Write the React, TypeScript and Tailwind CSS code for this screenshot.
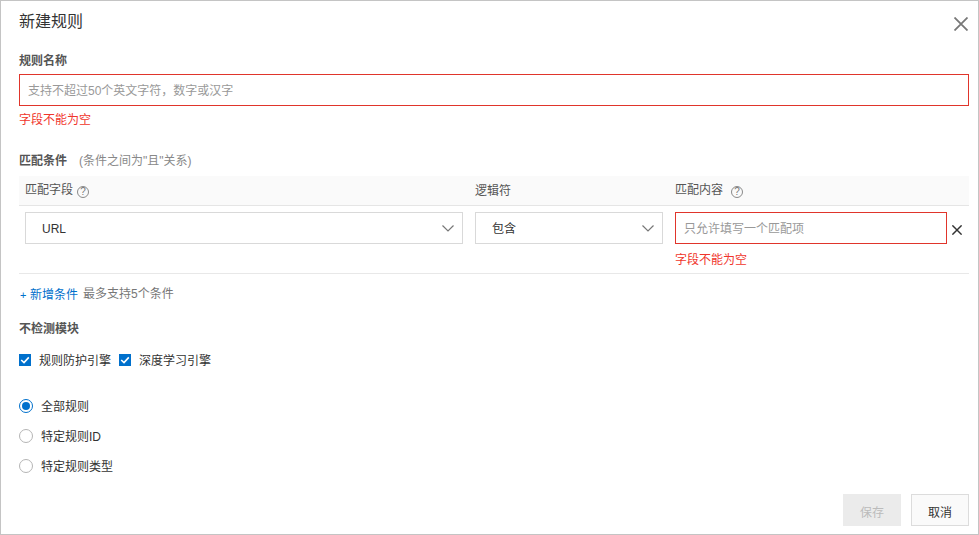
import React from 'react'

const Help = ({ className }: { className: string }) => (
    <span className={`mt-[3px] inline-flex h-[12px] w-[12px] items-center justify-center rounded-full border border-[#8a8a8a] text-[10px] leading-none text-[#777] ${className}`}>?</span>
)

const CrossIcon = ({ className, size, width }: { className: string, size: number, width: number }) => (
    <svg viewBox="0 0 14 14" width={size} height={size} className={className} fill="none" stroke="currentColor" strokeWidth={width}>
        <path d="M0.5 0.5 L13.5 13.5 M13.5 0.5 L0.5 13.5" />
    </svg>
)

const Select = ({ value, className }: { value: string, className: string }) => (
    <div className={`flex h-[32px] items-center justify-between border border-[#d9d9d9] bg-white pl-[16px] pr-[8px] text-[#333] ${className}`}>
        <span className="pt-[2px]">{value}</span>
        <svg viewBox="0 0 12 7" className="mt-[1px] h-[7px] w-[12px]" fill="none" stroke="#777" strokeWidth="1.2">
            <path d="M0.5 0.5 L6 6 L11.5 0.5" />
        </svg>
    </div>
)

const ErrorText = ({ className }: { className: string }) => (
    <div className={`h-[16px] text-[12px] leading-[16px] text-[#f0352b] ${className}`}>字段不能为空</div>
)

const Check = ({ label }: { label: string }) => (
    <label className="flex items-center">
        <span className="flex h-[12px] w-[12px] items-center justify-center bg-[#0070cc]">
            <svg viewBox="0 0 12 12" className="h-[12px] w-[12px]" fill="none" stroke="white" strokeWidth="1.6">
                <path d="M2.2 6 L5 8.6 L9.8 3.4" />
            </svg>
        </span>
        <span className="ml-[8px] pt-[2px] text-[#333]">{label}</span>
    </label>
)

const Radio = ({ label, checked }: { label: string, checked?: boolean }) => (
    <label className="flex h-[14px] items-center">
        {checked ? (
            <span className="flex h-[14px] w-[14px] items-center justify-center rounded-full border border-[#0070cc]">
                <span className="h-[8px] w-[8px] rounded-full bg-[#0070cc]" />
            </span>
        ) : (
            <span className="h-[14px] w-[14px] rounded-full border border-[#b5b5b5]" />
        )}
        <span className="ml-[8px] pt-[2px] text-[#333]">{label}</span>
    </label>
)

export default function App() {
    return (
        <div className="box-border flex h-[535px] w-[979px] flex-col border border-[#c4c4c4] bg-white pl-[18px] pr-[9px] text-[12px] leading-[16px] text-[#333] [font-family:'Liberation_Sans','Noto_Sans_CJK_SC',sans-serif]">
            <div className="mt-[11px] flex h-[20px] items-center justify-between">
                <h2 className="text-[16px] font-normal leading-[20px] text-[#333]">新建规则</h2>
                <CrossIcon className="mr-[1px] mt-[4px] text-[#777]" size={14} width={1.75} />
            </div>

            <div className="mt-[21px] h-[16px] font-bold text-[#555]">规则名称</div>
            <div className="mt-[5px] flex h-[32px] items-center border border-[#e0352b] pl-[8px] pt-[2px] text-[#999]">支持不超过50个英文字符，数字或汉字</div>
            <ErrorText className="mt-[6px]" />

            <div className="mt-[25px] flex h-[16px] items-center">
                <span className="font-bold text-[#555]">匹配条件</span>
                <span className="ml-[12px] text-[#888]">(条件之间为"且"关系)</span>
            </div>

            <div className="mt-[7px] flex h-[30px] items-center border-b border-[#e5e5e5] bg-[#fafafa] text-[#555]">
                <div className="ml-[6px] flex w-[450px] items-center"><span className="pb-[2px]">匹配字段</span><Help className="ml-[4px]" /></div>
                <div className="w-[200px]">逻辑符</div>
                <div className="flex items-center"><span className="pb-[2px]">匹配内容</span><Help className="ml-[8px]" /></div>
            </div>

            <div className="flex h-[68px] border-b border-[#e8e8e8] pt-[6px]">
                <Select value="URL" className="ml-[6px] w-[438px]" />
                <Select value="包含" className="ml-[12px] w-[188px]" />
                <div className="ml-[12px] w-[272px]">
                    <div className="flex h-[32px] items-center border border-[#e0352b] pl-[8px] pt-[2px] text-[#999]">只允许填写一个匹配项</div>
                    <ErrorText className="mt-[8px]" />
                </div>
                <CrossIcon className="ml-[5px] mt-[13px] text-[#333]" size={10} width={2} />
            </div>

            <div className="mt-[12px] flex h-[16px] items-center">
                <span className="ml-[1px] w-[10px] pt-[2px] text-[11px] text-[#0070cc]">+</span>
                <span className="pt-[2px] text-[#0070cc]">新增条件</span>
                <span className="ml-[5px] text-[#777]">最多支持5个条件</span>
            </div>

            <div className="mt-[19px] h-[16px] font-bold text-[#555]">不检测模块</div>

            <div className="mt-[15px] flex h-[16px] items-center gap-[8px]">
                <Check label="规则防护引擎" />
                <Check label="深度学习引擎" />
            </div>

            <div className="mt-[31px] flex flex-col gap-[16px]">
                <Radio label="全部规则" checked />
                <Radio label="特定规则ID" />
                <Radio label="特定规则类型" />
            </div>

            <div className="mt-[21px] flex justify-end gap-[10px]">
                <button className="h-[32px] w-[58px] bg-[#ebebeb] pt-[6px] text-[#bbb]">保存</button>
                <button className="h-[32px] w-[58px] border border-[#dcdcdc] bg-[#fafafa] pt-[6px] text-[#333]">取消</button>
            </div>
        </div>
    )
}
